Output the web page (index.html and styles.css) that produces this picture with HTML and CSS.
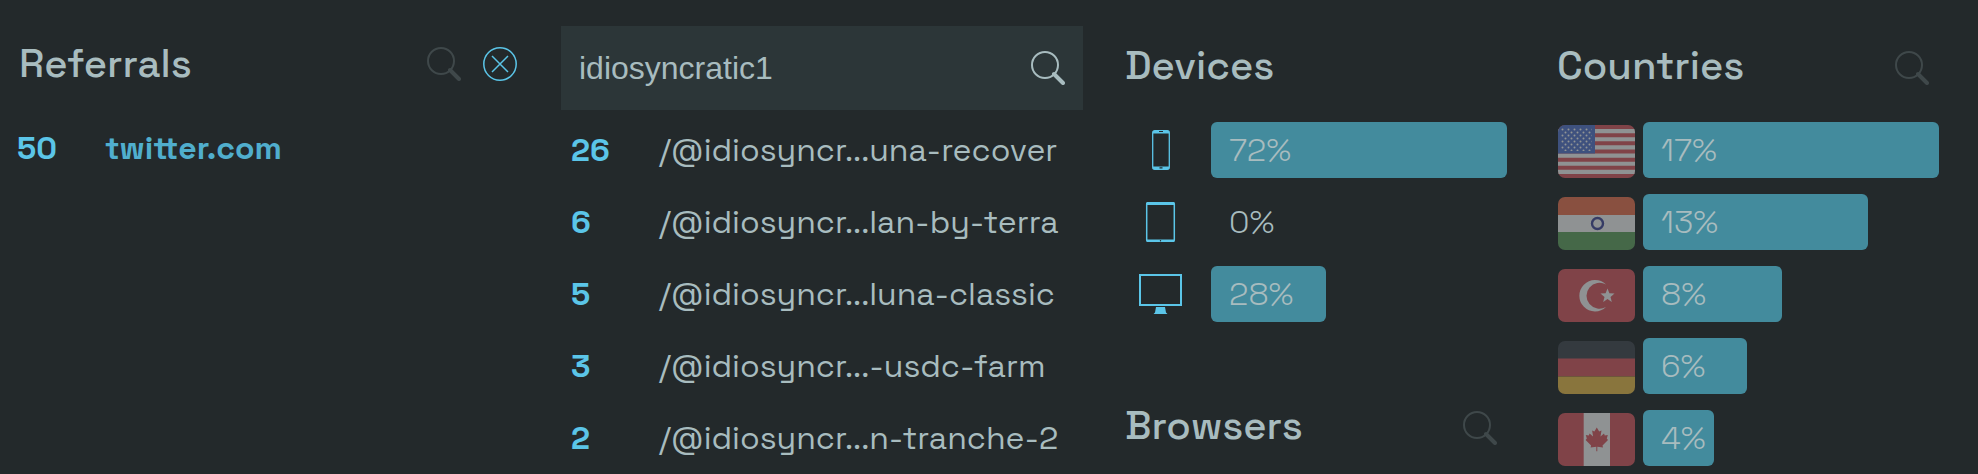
FILE: index.html
```
<!DOCTYPE html>
<html lang="en">
<head>
    <meta charset="UTF-8">
    <meta name="viewport" content="width=device-width, initial-scale=1.0">
    <title>Analytics</title>
    <link rel="stylesheet" href="styles.css">
</head>
<body>
    <!-- Shared shapes -->
    <svg class="sprite" aria-hidden="true">
        <symbol id="icon-search" viewBox="0 0 34 34">
            <circle cx="14" cy="14" r="13" fill="none" stroke="currentColor" stroke-width="2"/>
            <path d="M23 23L32 32" stroke="currentColor" stroke-width="4" stroke-linecap="round"/>
        </symbol>
        <symbol id="icon-close" viewBox="0 0 34 34">
            <circle cx="17" cy="17" r="16.2" fill="none" stroke="currentColor" stroke-width="1.5"/>
            <path d="M9 9L25 25M25 9L9 25" stroke="currentColor" stroke-width="1.5"/>
        </symbol>
    </svg>

    <main class="dashboard">
        <section class="panel referrals">
            <header class="panel-header">
                <h2>Referrals</h2>
                <button class="icon-button" aria-label="Search referrals"><svg class="icon"><use href="#icon-search"/></svg></button>
                <button class="icon-button active" aria-label="Clear filter"><svg class="icon"><use href="#icon-close"/></svg></button>
            </header>
            <ul class="rows">
                <li class="row"><span class="count">50</span><a class="selected" href="#">twitter.com</a></li>
            </ul>
        </section>

        <section class="panel pages">
            <header class="search-box">
                <input type="text" class="search-input" aria-label="Search pages" value="idiosyncratic1">
                <button class="icon-button bright" aria-label="Search"><svg class="icon"><use href="#icon-search"/></svg></button>
            </header>
            <ul class="rows">
                <li class="row"><span class="count">26</span><a href="#">/@idiosyncr...una-recover</a></li>
                <li class="row"><span class="count">6</span><a href="#">/@idiosyncr...lan-by-terra</a></li>
                <li class="row"><span class="count">5</span><a href="#">/@idiosyncr...luna-classic</a></li>
                <li class="row"><span class="count">3</span><a href="#">/@idiosyncr...-usdc-farm</a></li>
                <li class="row"><span class="count">2</span><a href="#">/@idiosyncr...n-tranche-2</a></li>
            </ul>
        </section>

        <div class="column">
            <section class="panel chart">
                <header class="panel-header">
                    <h2>Devices</h2>
                </header>
                <ul class="rows">
                    <li class="row">
                        <svg class="device" viewBox="0 0 44 40" role="img" aria-label="Mobile">
                            <rect x="13.7" y=".7" width="16.6" height="38.6" rx="2" fill="none" stroke="currentColor" stroke-width="1.3"/>
                            <path d="M14 1h16v2.500H14zM14 36.500h16V39H14z" fill="currentColor"/>
                            <path d="M20 1.500h4M20.500 37.800h3" stroke="#23292b" stroke-width="1.200"/>
                        </svg>
                        <div class="track"><div class="bar" style="width: 100%"><span>72%</span></div></div>
                    </li>
                    <li class="row">
                        <svg class="device" viewBox="0 0 44 40" role="img" aria-label="Tablet">
                            <rect x="7.700" y=".7" width="27.600" height="38.600" rx="1" fill="none" stroke="currentColor" stroke-width="1.500"/>
                            <path d="M8 .5h27V3H8zM8 37.500h27V40H8z" fill="currentColor"/>
                            <circle cx="21.500" cy="38.700" r=".7" fill="#23292b"/>
                        </svg>
                        <div class="track"><div class="bar" style="width: 0%"><span>0%</span></div></div>
                    </li>
                    <li class="row">
                        <svg class="device" viewBox="0 0 44 40" role="img" aria-label="Desktop">
                            <rect x="1" y="1" width="41" height="30" fill="none" stroke="currentColor" stroke-width="2"/>
                            <path d="M17 33h9l1 5.500 1.500 1.500h-14l1.500-1.500z" fill="currentColor"/>
                        </svg>
                        <div class="track"><div class="bar" style="width: 38.9%"><span>28%</span></div></div>
                    </li>
                </ul>
            </section>
            <section class="panel chart">
                <header class="panel-header">
                    <h2>Browsers</h2>
                    <button class="icon-button" aria-label="Search browsers"><svg class="icon"><use href="#icon-search"/></svg></button>
                </header>
            </section>
        </div>

        <section class="panel chart">
            <header class="panel-header">
                <h2>Countries</h2>
                <button class="icon-button" aria-label="Search countries"><svg class="icon"><use href="#icon-search"/></svg></button>
            </header>
            <ul class="rows">
                <li class="row">
                    <svg class="flag" viewBox="0 0 77 53" role="img" aria-label="United States">
                        <defs>
                            <pattern id="stars" width="6" height="6" patternUnits="userSpaceOnUse">
                                <circle cx="1.500" cy="1.500" r="1" fill="#fff"/>
                                <circle cx="4.500" cy="4.500" r="1" fill="#fff"/>
                            </pattern>
                        </defs>
                        <rect width="77" height="53" fill="#dd5e66"/>
                        <path d="M0 6.100h78M0 14.300h78M0 22.400h78M0 30.600h78M0 38.700h78M0 46.900h78" stroke="#fafafa" stroke-width="4.080"/>
                        <rect width="37" height="28.500" fill="#5979d0"/>
                        <rect x="3" y="3" width="31" height="23" fill="url(#stars)"/>
                    </svg>
                    <div class="track"><div class="bar" style="width: 100%"><span>17%</span></div></div>
                </li>
                <li class="row">
                    <svg class="flag" viewBox="0 0 77 53" role="img" aria-label="India">
                        <rect width="77" height="18" fill="#ee7855"/>
                        <rect y="18" width="77" height="17.500" fill="#fafafa"/>
                        <rect y="35" width="77" height="18" fill="#68a866"/>
                        <circle cx="39.500" cy="26.500" r="5.500" fill="none" stroke="#4a50a0" stroke-width="2.400"/>
                    </svg>
                    <div class="track"><div class="bar" style="width: 76.1%"><span>13%</span></div></div>
                </li>
                <li class="row">
                    <svg class="flag" viewBox="0 0 77 53" role="img" aria-label="Turkey">
                        <rect width="77" height="53" fill="#dd5e66"/>
                        <path d="M48 15.500A15.700 15.700 0 1 0 48 38A13 13 0 1 1 48 15.500z" fill="#fafafa"/>
                        <path d="M49.500 19.500l1.900 4.800 5.100.3-4 3.300 1.300 5-4.300-2.800-4.300 2.800 1.300-5-4-3.300 5.100-.3z" fill="#fafafa"/>
                    </svg>
                    <div class="track"><div class="bar" style="width: 46.9%"><span>8%</span></div></div>
                </li>
                <li class="row">
                    <svg class="flag" viewBox="0 0 77 53" role="img" aria-label="Germany">
                        <rect width="77" height="18" fill="#464b54"/>
                        <rect y="17.500" width="77" height="18" fill="#dd5e66"/>
                        <rect y="35.500" width="77" height="17.500" fill="#eec04f"/>
                    </svg>
                    <div class="track"><div class="bar" style="width: 35.1%"><span>6%</span></div></div>
                </li>
                <li class="row">
                    <svg class="flag" viewBox="0 0 77 53" role="img" aria-label="Canada">
                        <rect width="77" height="53" fill="#dd5e66"/>
                        <rect x="25.700" width="26.300" height="53" fill="#fafafa"/>
                        <path d="M38.800 14.500l2.400 4 2.300-1-1 6 3.500-3 .8 2 3-.5-1 3.500 1.200 1.500-5.500 5.500.5 2-5.700-.7v4.500h-1v-4.500l-5.700.7.5-2-5.500-5.500 1.200-1.500-1-3.500 3 .5.8-2 3.500 3-1-6 2.300 1z" fill="#dd5e66"/>
                    </svg>
                    <div class="track"><div class="bar" style="width: 24%"><span>4%</span></div></div>
                </li>
            </ul>
        </section>
    </main>
</body>
</html>
```
FILE: styles.css
```
:root {
    --background-color: #23292b;
    --field-bg: #2c3638;
    --text-color: #a8bcbf;
    --muted-color: #3f484a;
    --accent-color: #5bc5e8;
    --accent-soft: #50aecd;
    --bar-color: #438b9d;
}

* {
    box-sizing: border-box;
}

body {
    margin: 0;
    background-color: var(--background-color);
    color: var(--text-color);
    font-family: "Space Grotesk", Inter, sans-serif;
    font-size: 32px;
    line-height: 40px;
}

.sprite {
    position: absolute;
    width: 0;
    height: 0;
}

.dashboard {
    display: grid;
    grid-template-columns: 522fr 522fr 408fr 408fr;
    gap: 24px;
    align-items: start;
    padding: 26px 31px 0 15px;
}

.panel {
    min-width: 0;
}

.column {
    display: flex;
    flex-direction: column;
    gap: 64px;
    min-width: 0;
}

.chart {
    padding: 0 8px 0 18px;
}

/* Headers */
.panel-header {
    display: flex;
    align-items: center;
    gap: 22px;
    height: 84px;
    padding-right: 10px;
}

.referrals .panel-header {
    height: 76px;
    padding-left: 4px;
    padding-right: 20px;
}

h2 {
    flex: 1;
    margin: 0;
    padding-bottom: 4px;
    font-size: 40px;
    font-weight: 500;
}

.referrals h2 {
    padding-bottom: 0;
}

.search-box {
    display: flex;
    align-items: center;
    gap: 18px;
    height: 84px;
    padding: 0 18px;
    background-color: var(--field-bg);
}

.search-input {
    flex: 1;
    min-width: 0;
    padding: 0;
    border: none;
    outline: none;
    background: none;
    color: var(--text-color);
    font-family: "Liberation Sans", Arial, sans-serif;
    font-size: 32px;
}

.icon-button {
    display: flex;
    padding: 0;
    border: none;
    background: none;
    color: var(--muted-color);
    cursor: pointer;
}

.icon-button.active {
    color: var(--accent-color);
}

.icon-button.bright {
    color: var(--text-color);
}

.icon {
    width: 34px;
    height: 34px;
}

/* Rows */
.rows {
    display: flex;
    flex-direction: column;
    gap: 16px;
    margin: 0;
    padding: 12px 0 0;
    list-style: none;
}

.row {
    display: flex;
    align-items: center;
    height: 56px;
}

.row a {
    color: inherit;
    text-decoration: none;
    white-space: nowrap;
}

.row a.selected {
    color: var(--accent-soft);
    font-weight: 700;
}

.count {
    width: 88px;
    color: var(--accent-color);
    font-weight: 700;
}

.referrals .rows {
    padding-top: 18px;
    padding-left: 2px;
}

.pages .rows {
    padding-left: 10px;
}

/* Charts */
.track {
    flex: 1;
    min-width: 0;
}

.bar {
    height: 56px;
    border-radius: 6px;
    background-color: var(--bar-color);
    font-weight: 300;
    line-height: 56px;
    white-space: nowrap;
}

.bar span {
    margin-left: 18px;
}

.device {
    flex: none;
    width: 44px;
    height: 40px;
    margin: 0 28px 0 14px;
    color: var(--accent-color);
}

.flag {
    flex: none;
    align-self: flex-end;
    width: 77px;
    height: 53px;
    margin: 0 8px 0 1px;
    border-radius: 7px;
    opacity: 0.5;
}
```
